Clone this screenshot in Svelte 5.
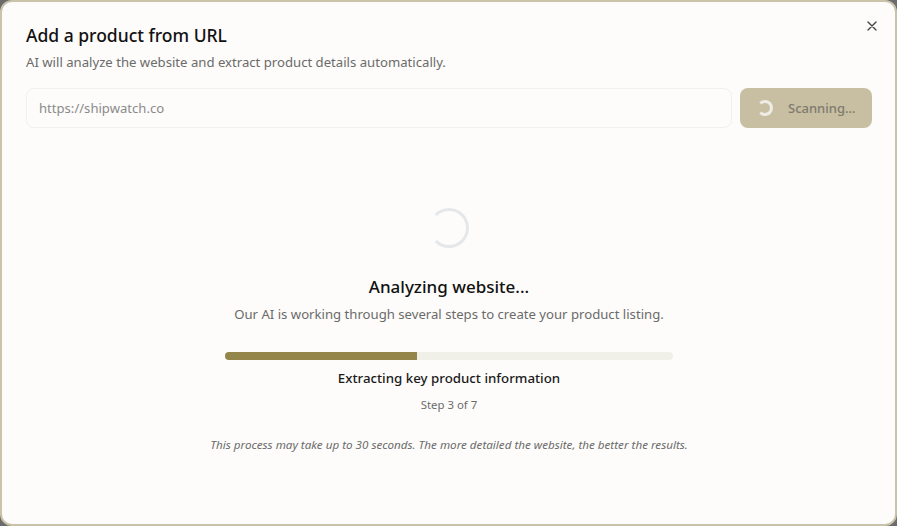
<script lang="ts">
  let url = $state("");
  const step = 3;
  const total = 7;
  const progress = (step / total) * 100;
</script>

<div class="dialog">
  <button class="close" aria-label="Close">
    <svg viewBox="0 0 24 24" width="16" height="16" fill="none" stroke="currentColor" stroke-width="2" stroke-linecap="round">
      <path d="M18 6 6 18M6 6l12 12" />
    </svg>
  </button>

  <header>
    <h2>Add a product from URL</h2>
    <p>AI will analyze the website and extract product details automatically.</p>
  </header>

  <div class="url-row">
    <input type="text" placeholder="https://shipwatch.co" bind:value={url} disabled />
    <button class="scan" disabled>
      <span class="btn-spinner"></span>
      Scanning...
    </button>
  </div>

  <section class="status">
    <div class="spinner"></div>
    <h3>Analyzing website...</h3>
    <p class="lead">Our AI is working through several steps to create your product listing.</p>
    <div class="track">
      <div class="fill" style="width: {progress}%"></div>
    </div>
    <p class="current">Extracting key product information</p>
    <p class="count">Step {step} of {total}</p>
    <p class="note">This process may take up to 30 seconds. The more detailed the website, the better the results.</p>
  </section>
</div>

<style>
  :global(body) {
    margin: 0;
    background: #6b6b6b;
  }
  .dialog {
    position: relative;
    box-sizing: border-box;
    height: 526px;
    padding: 23px 23px 0 24px;
    background: #fdfcfa;
    border: 2px solid #c9c3aa;
    border-radius: 12px;
    font-family: "Noto Sans", "Open Sans", sans-serif;
    color: #111;
  }
  .close {
    position: absolute;
    top: 16px;
    right: 15px;
    display: flex;
    padding: 0;
    border: none;
    background: none;
    color: #444;
  }
  header h2 {
    margin: 0;
    font-size: 17.5px;
    line-height: 20px;
    font-weight: 500;
  }
  header p {
    margin: 7px 0 0;
    font-size: 13.15px;
    line-height: 20px;
    color: #6b6b6b;
  }
  .url-row {
    display: flex;
    gap: 8px;
    margin-top: 16px;
  }
  input {
    flex: 1;
    min-width: 0;
    box-sizing: border-box;
    height: 40px;
    padding: 0 12px;
    font: inherit;
    font-size: 13.1px;
    background: #fdfcfa;
    border: 1px solid #f2f0ea;
    border-radius: 8px;
  }
  input::placeholder {
    color: #8a8a8a;
    opacity: 1;
  }
  .scan {
    display: flex;
    align-items: center;
    gap: 15px;
    box-sizing: border-box;
    width: 132px;
    height: 40px;
    padding: 0 16px 0 17px;
    font: inherit;
    font-size: 13px;
    font-weight: 500;
    color: #7f7b6e;
    background: #c8bfa2;
    border: none;
    border-radius: 8px;
  }
  .btn-spinner {
    flex: none;
    box-sizing: border-box;
    width: 16px;
    height: 16px;
    border: 3px solid #eeece6;
    border-left-color: transparent;
    border-radius: 50%;
  }
  .status {
    display: flex;
    flex-direction: column;
    align-items: center;
    padding-top: 80px;
    text-align: center;
  }
  .spinner {
    box-sizing: border-box;
    width: 40px;
    height: 40px;
    border: 3px solid #e5e7eb;
    border-left-color: transparent;
    border-radius: 50%;
  }
  h3 {
    margin: 25px 0 0;
    font-size: 17px;
    line-height: 28px;
    font-weight: 500;
  }
  .lead {
    margin: 3px 0 0;
    font-size: 13.15px;
    line-height: 20px;
    color: #6b6b6b;
  }
  .track {
    width: 448px;
    height: 8px;
    margin-top: 28px;
    overflow: hidden;
    background: #f1f0e8;
    border-radius: 4px;
  }
  .fill {
    height: 100%;
    background: #94854a;
  }
  .current {
    margin: 8px 0 0;
    font-size: 13.3px;
    line-height: 20px;
    font-weight: 500;
    color: #1a1a1a;
  }
  .count {
    margin: 7px 0 0;
    font-size: 11.4px;
    line-height: 20px;
    color: #6b6b6b;
  }
  .note {
    margin: 22px 0 0;
    font-size: 11.63px;
    line-height: 16px;
    font-style: italic;
    color: #6b6b6b;
  }
</style>
